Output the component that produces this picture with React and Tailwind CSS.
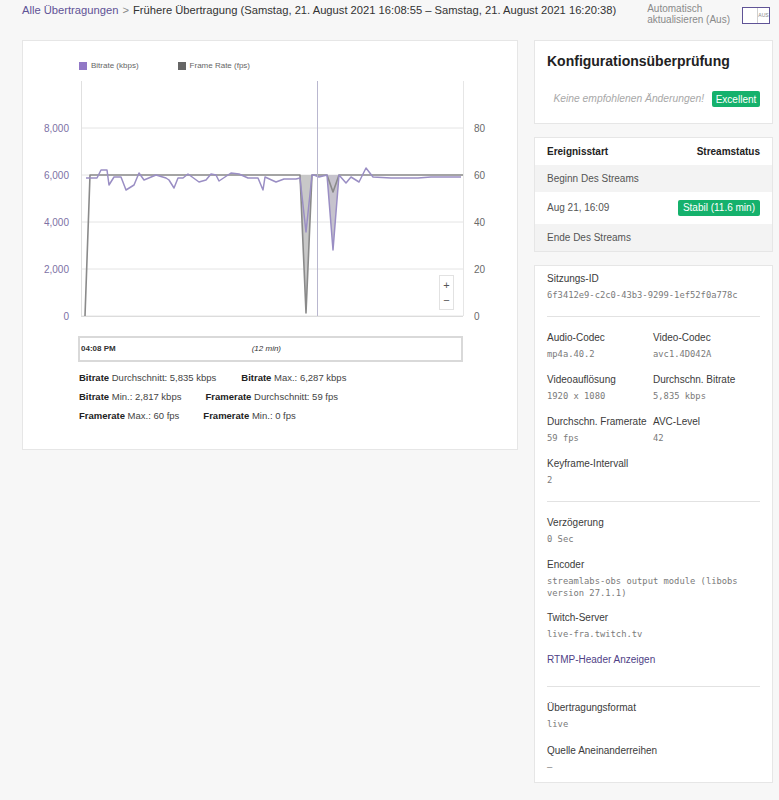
import React from "react";

const bitratePts = [
  [85, 178], [96, 178], [100, 170], [106, 170], [108, 185], [113, 177], [120, 177],
  [125, 190], [133, 185], [138, 173], [143, 180], [155, 175], [165, 178], [168, 180],
  [173, 188], [177, 178], [182, 178], [187, 174], [198, 182], [205, 180], [210, 174],
  [215, 175], [218, 181], [230, 173], [238, 174], [247, 178], [253, 178], [257, 178],
  [262, 190], [264, 177], [275, 182], [283, 179], [295, 179], [299, 178], [305, 232],
  [311, 175], [313, 175], [318, 177], [326, 175], [332, 250], [338, 175], [345, 183],
  [350, 177], [358, 182], [365, 168], [372, 177], [390, 178], [417, 178], [430, 177],
  [460, 177],
];

function Chart() {
  const grid = [128, 175, 222, 269, 316];
  const left = ["8,000", "6,000", "4,000", "2,000", "0"];
  const right = ["80", "60", "40", "20", "0"];
  return (
    <svg width="496" height="250" viewBox="22 75 496 250" className="block">
      {grid.map((y) => (
        <line key={y} x1="80" x2="462" y1={y} y2={y} stroke="#e4e4e4" strokeWidth="1" />
      ))}
      <line x1="80.5" x2="80.5" y1="81" y2="316" stroke="#e0e0e0" />
      <line x1="462.5" x2="462.5" y1="81" y2="316" stroke="#e6e6e6" />
      <line x1="80" x2="462" y1="316.5" y2="316.5" stroke="#dcdcdc" />
      {grid.map((y, i) => (
        <text key={"l" + y} x="68" y={y + 4} textAnchor="end" fontSize="10" fill="#7d71a5" fontFamily="Liberation Sans, Arial, sans-serif">
          {left[i]}
        </text>
      ))}
      {grid.map((y, i) => (
        <text key={"r" + y} x="473" y={y + 4} fontSize="10" fill="#6a6a6a" fontFamily="Liberation Sans, Arial, sans-serif">
          {right[i]}
        </text>
      ))}
      <polygon points="299,175 305,313 311,175" fill="#c8c8c8" />
      <polygon points="326,175 332,250 338,175" fill="#c6c3cd" />
      <polyline
        points="84,316 89,175 299,175 305,313 311,175 326,175 332,192 338,175 462,175"
        fill="none"
        stroke="#8a8a8a"
        strokeWidth="1.6"
        strokeLinejoin="round"
      />
      <polyline
        points={bitratePts.map((p) => p.join(",")).join(" ")}
        fill="none"
        stroke="#9a8ec4"
        strokeWidth="1.5"
        strokeLinejoin="round"
      />
      <line x1="316.5" x2="316.5" y1="81" y2="316" stroke="#b9b7cf" strokeWidth="1" />
      <g>
        <rect x="438.5" y="275.5" width="14" height="34" fill="#ffffff" stroke="#e2e2e2" />
        <text x="445.5" y="289" textAnchor="middle" fontSize="11" fill="#555" fontFamily="Liberation Sans, Arial, sans-serif">+</text>
        <text x="445.5" y="304" textAnchor="middle" fontSize="11" fill="#555" fontFamily="Liberation Sans, Arial, sans-serif">−</text>
      </g>
    </svg>
  );
}

function Stat({ b, rest }) {
  return (
    <span>
      <span className="font-bold text-[#222]">{b}</span> {rest}
    </span>
  );
}

function Field({ label, value, className = "" }) {
  return (
    <div className={className}>
      <div className="text-[10px] leading-[12px] text-[#3b3b3b]">{label}</div>
      <div className="mt-[4px] font-['DejaVu_Sans_Mono',monospace] text-[8.8px] leading-[12px] text-[#7a7a7a]">
        {value}
      </div>
    </div>
  );
}

export default function App() {
  return (
    <div className="min-h-[800px] bg-[#f7f7f7] font-['Liberation_Sans',Arial,sans-serif]">
      <div className="flex h-[40px] items-start pl-[22px]">
        <div className="mt-[3px] text-[11.2px] leading-[14px] text-[#333]">
          <span className="text-[#5f5396]">Alle Übertragungen</span>
          <span className="mx-[4px] text-[#888]">&gt;</span>
          <span>Frühere Übertragung (Samstag, 21. August 2021 16:08:55 – Samstag, 21. August 2021 16:20:38)</span>
        </div>
        <div className="ml-auto mr-[9px] mt-[3px] flex items-start gap-[12px]">
          <div className="text-[10px] leading-[11px] text-[#8a8a8a]">
            Automatisch
            <br />
            aktualisieren (Aus)
          </div>
          <div className="mt-[4px] flex h-[17px] w-[28px] border border-[#5f5396] bg-white">
            <div className="w-[14px]" />
            <div className="flex flex-1 items-center justify-center border-l border-[#cfcfcf] text-[5px] text-[#888]">
              AUS
            </div>
          </div>
        </div>
      </div>

      <div className="flex items-start gap-[16px] pl-[22px]">
        <div className="h-[410px] w-[496px] border border-[#e6e6e6] bg-white">
          <div className="flex h-[34px] items-end gap-[39px] pb-[4px] pl-[56px] text-[8px] leading-[10px] text-[#666]">
            <div className="flex items-center gap-[4px]">
              <span className="h-[8px] w-[8px] bg-[#9178c6]" />
              Bitrate (kbps)
            </div>
            <div className="flex items-center gap-[4px]">
              <span className="h-[8px] w-[8px] bg-[#666]" />
              Frame Rate (fps)
            </div>
          </div>
          <Chart />
          <div className="ml-[55px] mt-[11px] flex h-[26px] w-[385px] items-center border-2 border-[#d9d9d9] text-[8px] text-[#333]">
            <span className="ml-[1px] font-bold">04:08 PM</span>
            <span className="ml-[136px] italic">(12 min)</span>
          </div>
          <div className="mt-[10px] flex flex-col gap-[7px] pl-[56px] text-[9.5px] leading-[12px] text-[#444]">
            <div className="flex gap-[25px]">
              <Stat b="Bitrate" rest="Durchschnitt: 5,835 kbps" />
              <Stat b="Bitrate" rest="Max.: 6,287 kbps" />
            </div>
            <div className="flex gap-[24px]">
              <Stat b="Bitrate" rest="Min.: 2,817 kbps" />
              <Stat b="Framerate" rest="Durchschnitt: 59 fps" />
            </div>
            <div className="flex gap-[24px]">
              <Stat b="Framerate" rest="Max.: 60 fps" />
              <Stat b="Framerate" rest="Min.: 0 fps" />
            </div>
          </div>
        </div>

        <div className="flex w-[239px] flex-col">
          <div className="h-[84px] border border-[#e6e6e6] bg-white px-[12px]">
            <div className="mt-[11px] text-[14px] font-bold leading-[18px] text-[#222]">
              Konfigurationsüberprüfung
            </div>
            <div className="mt-[21px] flex items-center justify-end gap-[8px]">
              <span className="text-[10.3px] italic text-[#a8a8a8]">Keine empfohlenen Änderungen!</span>
              <span className="flex h-[16px] w-[48px] items-center justify-center rounded-[2px] bg-[#15b16c] text-[10px] text-white">
                Excellent
              </span>
            </div>
          </div>

          <div className="mt-[13px] border border-[#e6e6e6] bg-white text-[10px] leading-[12px]">
            <div className="flex h-[27px] items-center justify-between px-[12px] font-bold text-[#222]">
              <span>Ereignisstart</span>
              <span>Streamstatus</span>
            </div>
            <div className="flex h-[27px] items-center bg-[#f3f3f3] px-[12px] text-[#555]">Beginn Des Streams</div>
            <div className="flex h-[32px] items-center justify-between px-[12px] text-[#555]">
              <span>Aug 21, 16:09</span>
              <span className="flex h-[16px] items-center rounded-[2px] bg-[#15b16c] px-[5px] text-white">
                Stabil (11.6 min)
              </span>
            </div>
            <div className="flex h-[27px] items-center bg-[#f3f3f3] px-[12px] text-[#555]">Ende Des Streams</div>
          </div>

          <div className="mt-[13px] h-[518px] border border-[#e6e6e6] bg-white px-[12px] pt-[7px]">
            <Field label="Sitzungs-ID" value="6f3412e9-c2c0-43b3-9299-1ef52f0a778c" />
            <div className="mt-[15px] h-px bg-[#e2e2e2]" />
            <div className="mt-[15px] grid grid-cols-[106px_1fr] gap-y-[14px]">
              <Field label="Audio-Codec" value="mp4a.40.2" />
              <Field label="Video-Codec" value="avc1.4D042A" />
              <Field label="Videoauflösung" value="1920 x 1080" />
              <Field label="Durchschn. Bitrate" value="5,835 kbps" />
              <Field label="Durchschn. Framerate" value="59 fps" />
              <Field label="AVC-Level" value="42" />
              <Field label="Keyframe-Intervall" value="2" />
            </div>
            <div className="mt-[15px] h-px bg-[#e2e2e2]" />
            <Field className="mt-[15px]" label="Verzögerung" value="0 Sec" />
            <Field
              className="mt-[14px]"
              label="Encoder"
              value={
                <>
                  streamlabs-obs output module (libobs
                  <br />
                  version 27.1.1)
                </>
              }
            />
            <Field className="mt-[13px]" label="Twitch-Server" value="live-fra.twitch.tv" />
            <div className="mt-[14px] text-[10px] leading-[12px] text-[#4f3f86]">RTMP-Header Anzeigen</div>
            <div className="mt-[20px] h-px bg-[#e2e2e2]" />
            <Field className="mt-[15px]" label="Übertragungsformat" value="live" />
            <Field className="mt-[15px]" label="Quelle Aneinanderreihen" value="–" />
          </div>
        </div>
      </div>
    </div>
  );
}
